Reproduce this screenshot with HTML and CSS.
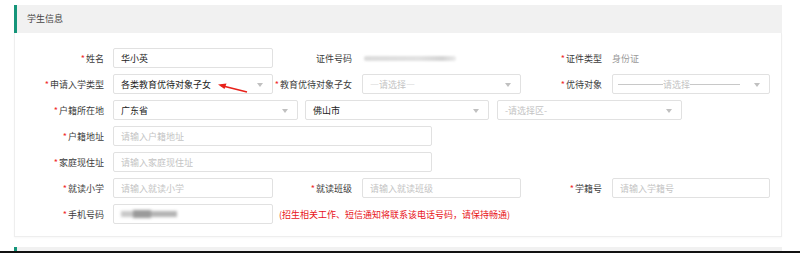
FILE: index.html
```html
<!DOCTYPE html>
<html lang="zh">
<head>
<meta charset="utf-8">
<link rel="stylesheet" href="styles.css">
</head>
<body>
<div class="page">
  <section class="panel">
    <div class="panel-head">学生信息</div>
    <div class="panel-body">
      <div class="row">
        <label class="lbl lbl-a"><i>*</i>姓名</label>
        <div class="field w160"><span class="val">华小英</span></div>
        <label class="lbl lbl-b">证件号码</label>
        <div class="plain"><span class="blur-id"></span></div>
        <label class="lbl lbl-c"><i>*</i>证件类型</label>
        <div class="plain gray">身份证</div>
      </div>
      <div class="row">
        <label class="lbl lbl-a"><i>*</i>申请入学类型</label>
        <div class="field select w160"><span class="val">各类教育优待对象子女</span><b class="caret"></b>
          <svg class="annot" width="32" height="12" viewBox="0 0 32 12"><path d="M4 3.5 L30 10" stroke="#e8211a" stroke-width="1.6" fill="none"/><path d="M1 2.6 L9.5 1.4 L7.5 7 Z" fill="#e8211a"/></svg>
        </div>
        <label class="lbl lbl-b"><i>*</i>教育优待对象子女</label>
        <div class="field select w159"><span class="ph">—请选择—</span><b class="caret"></b></div>
        <label class="lbl lbl-c"><i>*</i>优待对象</label>
        <div class="field select w158"><span class="ph dash"><em></em>请选择<em></em></span><b class="caret"></b></div>
      </div>
      <div class="row">
        <label class="lbl lbl-a"><i>*</i>户籍所在地</label>
        <div class="selects">
          <div class="field select w185"><span class="val">广东省</span><b class="caret"></b></div>
          <div class="field select w184"><span class="val">佛山市</span><b class="caret"></b></div>
          <div class="field select w185"><span class="ph">-请选择区-</span><b class="caret"></b></div>
        </div>
      </div>
      <div class="row">
        <label class="lbl lbl-a"><i>*</i>户籍地址</label>
        <div class="field w319"><span class="ph">请输入户籍地址</span></div>
      </div>
      <div class="row">
        <label class="lbl lbl-a"><i>*</i>家庭现住址</label>
        <div class="field w319"><span class="ph">请输入家庭现住址</span></div>
      </div>
      <div class="row">
        <label class="lbl lbl-a"><i>*</i>就读小学</label>
        <div class="field w160"><span class="ph">请输入就读小学</span></div>
        <label class="lbl lbl-b"><i>*</i>就读班级</label>
        <div class="field w159"><span class="ph">请输入就读班级</span></div>
        <label class="lbl lbl-c"><i>*</i>学籍号</label>
        <div class="field w158"><span class="ph">请输入学籍号</span></div>
      </div>
      <div class="row">
        <label class="lbl lbl-a"><i>*</i>手机号码</label>
        <div class="field w160"><span class="blur-phone"><s class="p1"></s><s class="p2"></s><s class="p3"></s></span></div>
        <span class="note">(招生相关工作、短信通知将联系该电话号码，请保持畅通)</span>
      </div>
    </div>
  </section>
  <section class="panel next">
    <div class="panel-head short"></div>
  </section>
  <div class="edge"></div>
</div>
</body>
</html>
```
FILE: styles.css
```css
html, body {
  margin: 0;
  padding: 0;
  background: #fff;
}
body {
  font-family: "Noto Sans CJK SC", "Noto Sans", "Liberation Sans", sans-serif;
  font-size: 9px;
  color: #444;
  width: 800px;
  height: 253px;
  overflow: hidden;
}
.page {
  padding-top: 5px;
}
.panel {
  margin: 0 18px 0 14px;
  position: relative;
}
.panel.next {
  margin-top: 10px;
}
.panel-head {
  height: 28px;
  line-height: 28px;
  background: #f1f1f1;
  border-left: 3px solid #15957a;
  padding-left: 10px;
  color: #444;
}
.panel-head.short {
  height: 4px;
}
.panel-body {
  border: 1px solid #eeeeee;
  border-top: none;
  padding: 15px 0 12px 0;
  display: flex;
  flex-direction: column;
  gap: 6px;
  box-shadow: 0 1px 2px rgba(0,0,0,0.03);
}
.row {
  display: flex;
  align-items: center;
  height: 20px;
}
.lbl {
  box-sizing: border-box;
  text-align: right;
  color: #3c3c3c;
  white-space: nowrap;
  flex: none;
}
.lbl i {
  font-style: normal;
  color: #f0262a;
  margin-right: 1px;
}
.lbl-a { width: 98px; padding-right: 9px; }
.lbl-b { width: 89px; padding-right: 10px; }
.lbl-c { width: 91px; padding-right: 10px; }
.field {
  box-sizing: border-box;
  height: 20px;
  border: 1px solid #e1e1e1;
  border-radius: 2px;
  background: #fff;
  display: flex;
  align-items: center;
  padding-left: 7px;
  position: relative;
  flex: none;
}
.w160 { width: 160px; }
.w159 { width: 159px; }
.w158 { width: 158px; }
.w185 { width: 185px; }
.w184 { width: 184px; }
.w319 { width: 319px; }
.selects {
  display: flex;
  gap: 7px;
}
.selects .field + .field + .field {
  margin-left: 1px;
}
.val {
  color: #222;
}
.ph {
  color: #c4c4c4;
}
.ph.dash {
  display: flex;
  align-items: center;
  width: 122px;
  margin-left: -2px;
}
.ph.dash em {
  display: block;
  flex: 1;
  height: 1px;
  background: #c8c8c8;
}
.ph.dash em:first-child { flex: 0 0 45px; }
.caret {
  position: absolute;
  right: 9px;
  top: 8px;
  width: 0;
  height: 0;
  border-left: 3px solid transparent;
  border-right: 3px solid transparent;
  border-top: 4px solid #c0c0c0;
}
.annot {
  position: absolute;
  left: 103px;
  top: 7px;
}
.plain {
  width: 159px;
  flex: none;
  box-sizing: border-box;
  display: flex;
  align-items: center;
  height: 20px;
}
.gray {
  color: #999;
}
.blur-id {
  display: block;
  width: 92px;
  height: 5px;
  margin-left: 2px;
  background: linear-gradient(90deg, #dcdcdc, #e2e2e2 60%, #d4d4d4 85%, #ebebeb);
  filter: blur(1px);
  border-radius: 2px;
}
.blur-phone {
  display: flex;
  align-items: center;
  filter: blur(1.4px);
}
.blur-phone s {
  display: block;
  height: 6px;
  text-decoration: none;
}
.blur-phone .p1 { width: 12px; background: #c8c8c8; }
.blur-phone .p2 { width: 18px; background: #9a9a9a; height: 8px; }
.blur-phone .p3 { width: 26px; background: #b4b4b4; }
.note {
  color: #e8131a;
  margin-left: 6px;
  white-space: nowrap;
}
.edge {
  position: absolute;
  left: 0;
  top: 251px;
  width: 800px;
  height: 2px;
  background: #111;
}
```
